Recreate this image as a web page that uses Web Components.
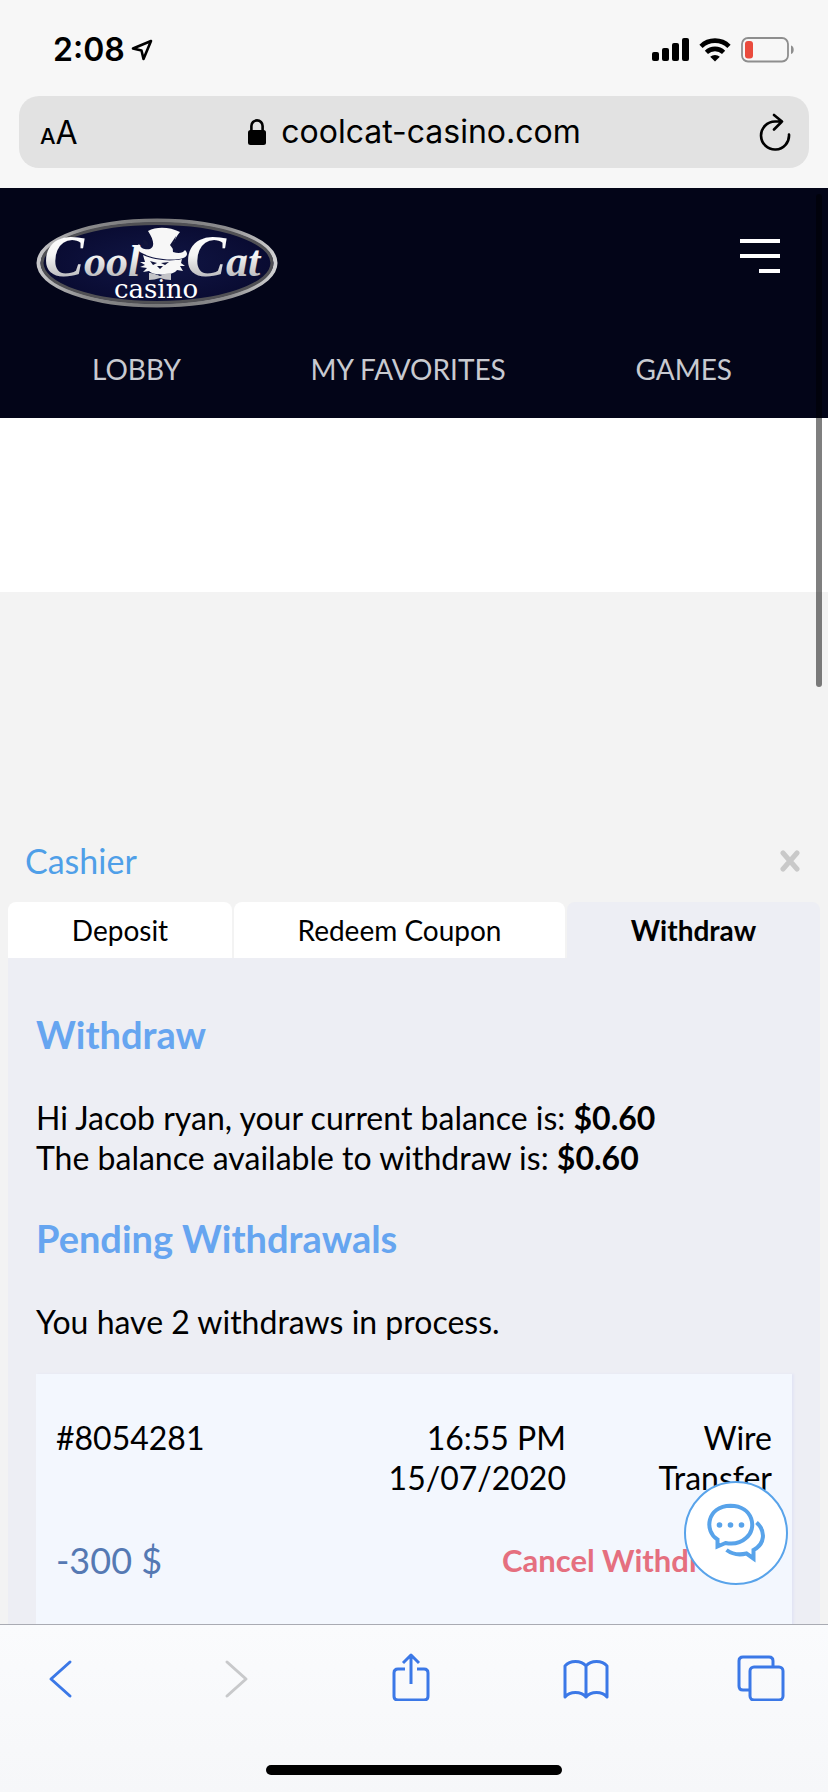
<!DOCTYPE html>
<html lang="en">
<head>
<meta charset="utf-8">
<meta name="viewport" content="width=device-width, initial-scale=1">
<title>CoolCat Casino - Cashier</title>
<style>
	body {
		margin: 0;
		height: 100vh;
		overflow: hidden;
		font-family: Lato, "Liberation Sans", sans-serif;
		color: #000;
		background: #f3f3f3;
	}
</style>
</head>
<body>
<browser-shell>
	<status-bar slot="top" time="2:08"></status-bar>
	<address-bar slot="top" url="coolcat-casino.com"></address-bar>

	<site-header>
		<a href="#lobby">LOBBY</a>
		<a href="#favorites">MY FAVORITES</a>
		<a href="#games">GAMES</a>
	</site-header>
	<cashier-panel>
		<withdraw-view name="Jacob ryan" balance="$0.60" available="$0.60">
			<withdraw-card ref="#8054281" time="16:55 PM" date="15/07/2020" amount="-300 $">Wire Transfer</withdraw-card>
		</withdraw-view>
	</cashier-panel>

	<chat-button slot="overlay"></chat-button>
	<tool-bar slot="bottom"></tool-bar>
</browser-shell>

<script>
class BaseElement extends HTMLElement {
	constructor() {
		super();
		this.attachShadow({ mode: "open" });
	}

	connectedCallback() {
		this.shadowRoot.innerHTML = this.render();
	}

	attr(name) {
		return this.getAttribute(name) || "";
	}
}

class BrowserShell extends BaseElement {
	render() {
		return `
			<style>
				:host {
					display: flex;
					flex-direction: column;
					height: 100vh;
				}
				main {
					flex: 1;
					min-height: 0;
					position: relative;
					overflow: hidden;
				}
				.scrollbar {
					position: absolute;
					top: 6px;
					right: 6px;
					width: 6px;
					height: 493px;
					border-radius: 3px;
					background: rgba(0, 0, 0, 0.5);
				}
			</style>
			<slot name="top"></slot>
			<main>
				<slot></slot>
				<slot name="overlay"></slot>
				<div class="scrollbar"></div>
			</main>
			<slot name="bottom"></slot>`;
	}
}

class StatusBar extends BaseElement {
	render() {
		return `
			<style>
				:host {
					display: flex;
					align-items: center;
					gap: 6px;
					height: 96px;
					box-sizing: border-box;
					padding: 4px 34px 0 53px;
					background: #f7f7f7;
					font: 600 32px/40px Inter, sans-serif;
				}
				.icons {
					display: flex;
					align-items: center;
					gap: 10px;
					margin-left: auto;
				}
				svg {
					display: block;
				}
			</style>
			<span>${this.attr("time")}</span>
			<svg width="22" height="22" viewBox="0 0 22 22"><path d="M20 2 2 9.500l8.500 2L12.500 20z" fill="none" stroke="#000" stroke-width="2.600" stroke-linejoin="round"/></svg>
			<div class="icons">
				<svg width="37" height="24" viewBox="0 0 37 24">
					<rect x="0" y="14" width="7" height="9" rx="2"/>
					<rect x="10" y="10" width="7" height="13" rx="2"/>
					<rect x="20" y="5" width="7" height="18" rx="2"/>
					<rect x="30" y="0" width="7" height="23" rx="2"/>
				</svg>
				<svg width="32" height="24" viewBox="0 0 32 24">
					<path d="M2 8.300a20 20 0 0 1 28 0M7.400 14.300a12.500 12.500 0 0 1 17.200 0" fill="none" stroke="#000" stroke-width="4.600"/>
					<path d="m16 23.500-4.800-4.700a7 7 0 0 1 9.600 0z"/>
				</svg>
				<svg width="53" height="26" viewBox="0 0 53 26">
					<rect x="1" y="1" width="46" height="23.500" rx="6" fill="none" stroke="#8e8e8e" stroke-width="1.800"/>
					<path d="M50 8.500c3.600 1 3.600 7.500 0 8.500z" fill="#8e8e8e"/>
					<rect x="4" y="4" width="8" height="17.500" rx="3" fill="#ea4b3d"/>
				</svg>
			</div>`;
	}
}

class AddressBar extends BaseElement {
	render() {
		return `
			<style>
				:host {
					display: block;
					padding: 0 19px 20px;
					background: #f7f7f7;
					font-family: Inter, sans-serif;
				}
				.field {
					display: grid;
					grid-template-columns: 60px 1fr 60px;
					align-items: center;
					height: 72px;
					border-radius: 20px;
					background: #e2e2e2;
				}
				button {
					padding: 0;
					border: 0;
					background: none;
					color: #000;
					font: inherit;
				}
				.reader {
					padding: 4px 0 0 21px;
					text-align: left;
					font-size: 32px;
					line-height: 40px;
					white-space: nowrap;
				}
				small {
					font-size: 22px;
					font-weight: 500;
				}
				.url {
					display: flex;
					align-items: center;
					justify-content: center;
					gap: 14px;
					color: #000;
					font-size: 32px;
					line-height: 40px;
					text-decoration: none;
				}
				.reload {
					justify-self: start;
					padding-left: 10px;
				}
				svg {
					display: block;
				}
			</style>
			<div class="field">
				<button class="reader" aria-label="Reader view"><small>A</small>A</button>
				<a class="url" href="#">
					<svg width="20" height="28" viewBox="0 0 20 28"><rect x="1" y="12" width="18" height="15" rx="2.500"/><path d="M4.400 13V8a5.600 5.600 0 0 1 11.200 0v5" fill="none" stroke="#000" stroke-width="2.600"/></svg>
					<span>${this.attr("url")}</span>
				</a>
				<button class="reload" aria-label="Reload"><svg width="32" height="38" viewBox="0 0 32 38"><path d="M30 21.500A14 14 0 1 1 16 8.500h7M15 2l8 6.500-8 8" fill="none" stroke="#000" stroke-width="2.600" stroke-linecap="round" stroke-linejoin="round"/></svg></button>
			</div>`;
	}
}

class CasinoLogo extends BaseElement {
	render() {
		return `
			<style>
				:host {
					display: block;
				}
				svg {
					display: block;
				}
				.script {
					font: italic 700 44px "Liberation Serif", serif;
					fill: url(#metal);
				}
				.initial {
					font-size: 60px;
				}
				.plain {
					font: 26px "DejaVu Serif", serif;
					fill: #fff;
				}
			</style>
			<svg width="242" height="90" viewBox="0 0 242 90" role="img" aria-label="CoolCat Casino">
				<defs>
					<linearGradient id="rim" x1="0" y1="0" x2="1" y2="0">
						<stop offset="0" stop-color="#c6c6c8"/>
						<stop offset=".2" stop-color="#8b8b8c"/>
						<stop offset=".5" stop-color="#777779"/>
						<stop offset=".8" stop-color="#8e8e90"/>
						<stop offset="1" stop-color="#d2d2d3"/>
					</linearGradient>
					<linearGradient id="metal" gradientUnits="userSpaceOnUse" x1="0" y1="15" x2="0" y2="65">
						<stop offset="0" stop-color="#fff"/>
						<stop offset=".45" stop-color="#f4f4f4"/>
						<stop offset="1" stop-color="#adadb0"/>
					</linearGradient>
					<radialGradient id="blue">
						<stop offset="0" stop-color="#111645"/>
						<stop offset="1" stop-color="#090b31"/>
					</radialGradient>
				</defs>
				<ellipse cx="121" cy="45" rx="118.500" ry="42.500" fill="url(#blue)" stroke="url(#rim)" stroke-width="4"/>
				<ellipse cx="121" cy="45" rx="115" ry="39.500" fill="none" stroke="#505054" stroke-width="3"/>
				<text class="script" x="8" y="58"><tspan class="initial">C</tspan>ool</text>
				<text class="script" x="150" y="58"><tspan class="initial">C</tspan>at</text>
				<!-- the cat: hat, face, bow tie -->
				<g fill="#f7f7f7">
					<path d="M112 13c9-5 22-4 32 1-5 6-8 13-7 20 6 2 10 1 12-2 4 4 2 8-6 9-15 2-31-2-39-7-3-2-3-6-1-8 2 5 7 6 11 5 5-2 4-9-2-18z"/>
					<path d="M107 37c11 5 27 7 39 4l-1 4 4 3-5 0 3 5-6-1c-3 6-24 6-28 1l-6 1 4-4-7-1 5-2-5-3h5z"/>
					<path d="M113 55c4 0 6 1 11 3 4-2 7-3 11-3v7c-4 0-7-1-11-2-4 1-7 2-11 2z" fill="#c4c4c8"/>
				</g>
				<path d="m114 43 7 2-4 2zm19 1-8 1 4 2zm-12 4h6l-3 3zM107 22c4 0 6 3 5 6-3 0-5-2-5-6M134 27l6-9-3 13z" fill="#11143b"/>
				<text class="plain" x="120" y="80" text-anchor="middle">casino</text>
			</svg>`;
	}
}

class SiteHeader extends BaseElement {
	render() {
		return `
			<style>
				:host {
					display: block;
					background: #030518;
				}
				.bar {
					display: flex;
					justify-content: space-between;
					align-items: flex-start;
					padding: 30px 48px 0 36px;
				}
				button {
					padding: 20px 0;
					border: 0;
					background: none;
				}
				svg {
					display: block;
				}
				nav {
					display: flex;
					justify-content: space-between;
					padding: 37px 96px 25px 92px;
					line-height: 48px;
				}
				::slotted(a) {
					color: #c8cad0;
					font-size: 28px;
					text-decoration: none;
				}
			</style>
			<div class="bar">
				<casino-logo></casino-logo>
				<button aria-label="Menu">
					<svg width="40" height="36" viewBox="0 0 40 36"><path d="M0 3h40M0 18h40M19 33h21" stroke="#fff" stroke-width="4"/></svg>
				</button>
			</div>
			<nav><slot></slot></nav>`;
	}
}

class CashierPanel extends BaseElement {
	render() {
		return `
			<style>
				:host {
					display: block;
					padding: 0 8px;
					border-top: 174px solid #fff;
					background: #f3f3f3;
				}
				header {
					display: flex;
					justify-content: space-between;
					align-items: center;
					padding: 248px 19px 20px 17px;
				}
				h1 {
					margin: 0;
					color: #4f9fe8;
					font-size: 34px;
					font-weight: 400;
					line-height: 42px;
				}
				button {
					font: inherit;
					color: inherit;
					border: 0;
					padding: 0;
					background: none;
				}
				svg {
					display: block;
				}
				.tabs {
					display: grid;
					grid-template-columns: 224fr 331fr 253fr;
					gap: 2px;
				}
				.tabs button {
					height: 56px;
					border-radius: 8px 8px 0 0;
					background: #fff;
					font-size: 28px;
				}
				.tabs button[aria-selected="true"] {
					background: #edeef4;
					font-weight: 700;
				}
			</style>
			<header>
				<h1>Cashier</h1>
				<button aria-label="Close"><svg width="22" height="22" viewBox="0 0 22 22"><path d="m4 3 14 16M18 3 4 19" stroke="#c9c9c9" stroke-width="5" stroke-linecap="round"/></svg></button>
			</header>
			<div class="tabs" role="tablist">
				<button role="tab">Deposit</button>
				<button role="tab">Redeem Coupon</button>
				<button role="tab" aria-selected="true">Withdraw</button>
			</div>
			<slot></slot>`;
	}
}

class WithdrawView extends BaseElement {
	render() {
		return `
			<style>
				:host {
					display: block;
					padding: 52px 28px 0;
					background: #edeef4;
				}
				h2 {
					margin: 0;
					color: #66a5f0;
					font-size: 38px;
					line-height: 48px;
				}
				p {
					margin: 40px 0 36px;
					font-size: 32px;
					line-height: 40px;
				}
				p:last-of-type {
					margin-bottom: 32px;
				}
			</style>
			<h2>Withdraw</h2>
			<p>
				Hi ${this.attr("name")}, your current balance is: <b>${this.attr("balance")}</b><br>
				The balance available to withdraw is: <b>${this.attr("available")}</b>
			</p>
			<h2>Pending Withdrawals</h2>
			<p>You have 2 withdraws in process.</p>
			<slot></slot>`;
	}
}

class WithdrawCard extends BaseElement {
	render() {
		return `
			<style>
				:host {
					display: block;
					padding: 44px 20px 300px;
					background: #f3f7fe;
					box-shadow: 2px 0 2px #e3e5f4;
					font-size: 32px;
					line-height: 40px;
				}
				.row {
					display: grid;
					grid-template-columns: 1fr 1fr 206px;
					text-align: right;
				}
				.row span:first-child {
					text-align: left;
				}
				.type {
					padding-left: 80px;
				}
				.actions {
					display: flex;
					justify-content: space-between;
					align-items: center;
					margin-top: 38px;
				}
				.amount {
					color: #5579b3;
					font-size: 36px;
					line-height: 48px;
				}
				button {
					padding: 0 8px;
					border: 0;
					background: none;
					color: #e56f7f;
					font: 700 31px/40px Lato, sans-serif;
				}
			</style>
			<div class="row">
				<span>${this.attr("ref")}</span>
				<span>${this.attr("time")}<br>${this.attr("date")}</span>
				<span class="type"><slot></slot></span>
			</div>
			<div class="actions">
				<span class="amount">${this.attr("amount")}</span>
				<button>Cancel Withdrawal</button>
			</div>`;
	}
}

class ChatButton extends BaseElement {
	render() {
		return `
			<style>
				:host {
					position: absolute;
					right: 40px;
					bottom: 39px;
				}
				button {
					display: grid;
					place-items: center;
					width: 104px;
					height: 104px;
					padding: 0;
					border: 2px solid #58a3ea;
					border-radius: 50%;
					background: #fff;
				}
			</style>
			<button aria-label="Chat">
				<svg width="60" height="60" viewBox="0 0 60 60">
					<g fill="none" stroke="#58a3ea" stroke-width="4">
						<path d="M11.500 43.500v-7C-2 28.500.500 3 24.500 2.700 47.500 3 51.500 26 40 35c-6 5.500-13 6.500-20.500 5z"/>
						<path d="M50.500 19.500C60 28 59 41 47.500 47v8.500l-7-5c-8 2-14.500.500-20-3.500"/>
					</g>
					<g fill="#58a3ea"><circle cx="13.500" cy="22" r="2.800"/><circle cx="24.500" cy="22" r="2.800"/><circle cx="35.500" cy="22" r="2.800"/></g>
				</svg>
			</button>`;
	}
}

class ToolBar extends BaseElement {
	render() {
		return `
			<style>
				:host {
					display: block;
					box-sizing: border-box;
					height: 168px;
					border-top: 1px solid #a9abb3;
					background: linear-gradient(#fafbfd, #f6f7f9);
				}
				nav {
					display: flex;
					justify-content: space-between;
					padding: 26px 43px 0 37px;
				}
				button {
					display: grid;
					justify-items: center;
					width: 48px;
					padding: 0;
					border: 0;
					background: none;
				}
				svg {
					display: block;
					fill: none;
					stroke: #3b78e7;
					stroke-width: 3;
					stroke-linecap: round;
					stroke-linejoin: round;
				}
				.off svg {
					stroke: #c8c9cb;
				}
				.home {
					width: 296px;
					height: 10px;
					margin: 64px auto 0;
					border-radius: 5px;
					background: #000;
				}
			</style>
			<nav>
				<button aria-label="Back"><svg width="34" height="50" viewBox="0 0 34 50"><path d="M26 11 7 28l19 17"/></svg></button>
				<button class="off" aria-label="Forward" disabled><svg width="34" height="50" viewBox="0 0 34 50"><path d="m8 11 19 17L8 45"/></svg></button>
				<button aria-label="Share"><svg width="40" height="50" viewBox="0 0 40 50"><path d="M14 18H7q-4 0-4 4v23q0 4 4 4h26q4 0 4-4V22q0-4-4-4h-7M20 33V4M12 12l8-8 8 8" stroke-linecap="butt"/></svg></button>
				<button aria-label="Bookmarks"><svg width="46" height="50" viewBox="0 0 46 50"><path d="M23 15c-5-6-16-6-21 0v31c5-6 16-6 21 0 5-6 16-6 21 0V15c-5-6-16-6-21 0zv31"/></svg></button>
				<button aria-label="Tabs"><svg width="48" height="50" viewBox="0 0 48 50"><rect x="13" y="16" width="33" height="33" rx="4"/><path d="M12 39H6q-4 0-4-4V10q0-4 4-4h26q4 0 4 4v5"/></svg></button>
			</nav>
			<div class="home"></div>`;
	}
}

customElements.define("browser-shell", BrowserShell);
customElements.define("status-bar", StatusBar);
customElements.define("address-bar", AddressBar);
customElements.define("casino-logo", CasinoLogo);
customElements.define("site-header", SiteHeader);
customElements.define("cashier-panel", CashierPanel);
customElements.define("withdraw-view", WithdrawView);
customElements.define("withdraw-card", WithdrawCard);
customElements.define("chat-button", ChatButton);
customElements.define("tool-bar", ToolBar);
</script>
</body>
</html>
